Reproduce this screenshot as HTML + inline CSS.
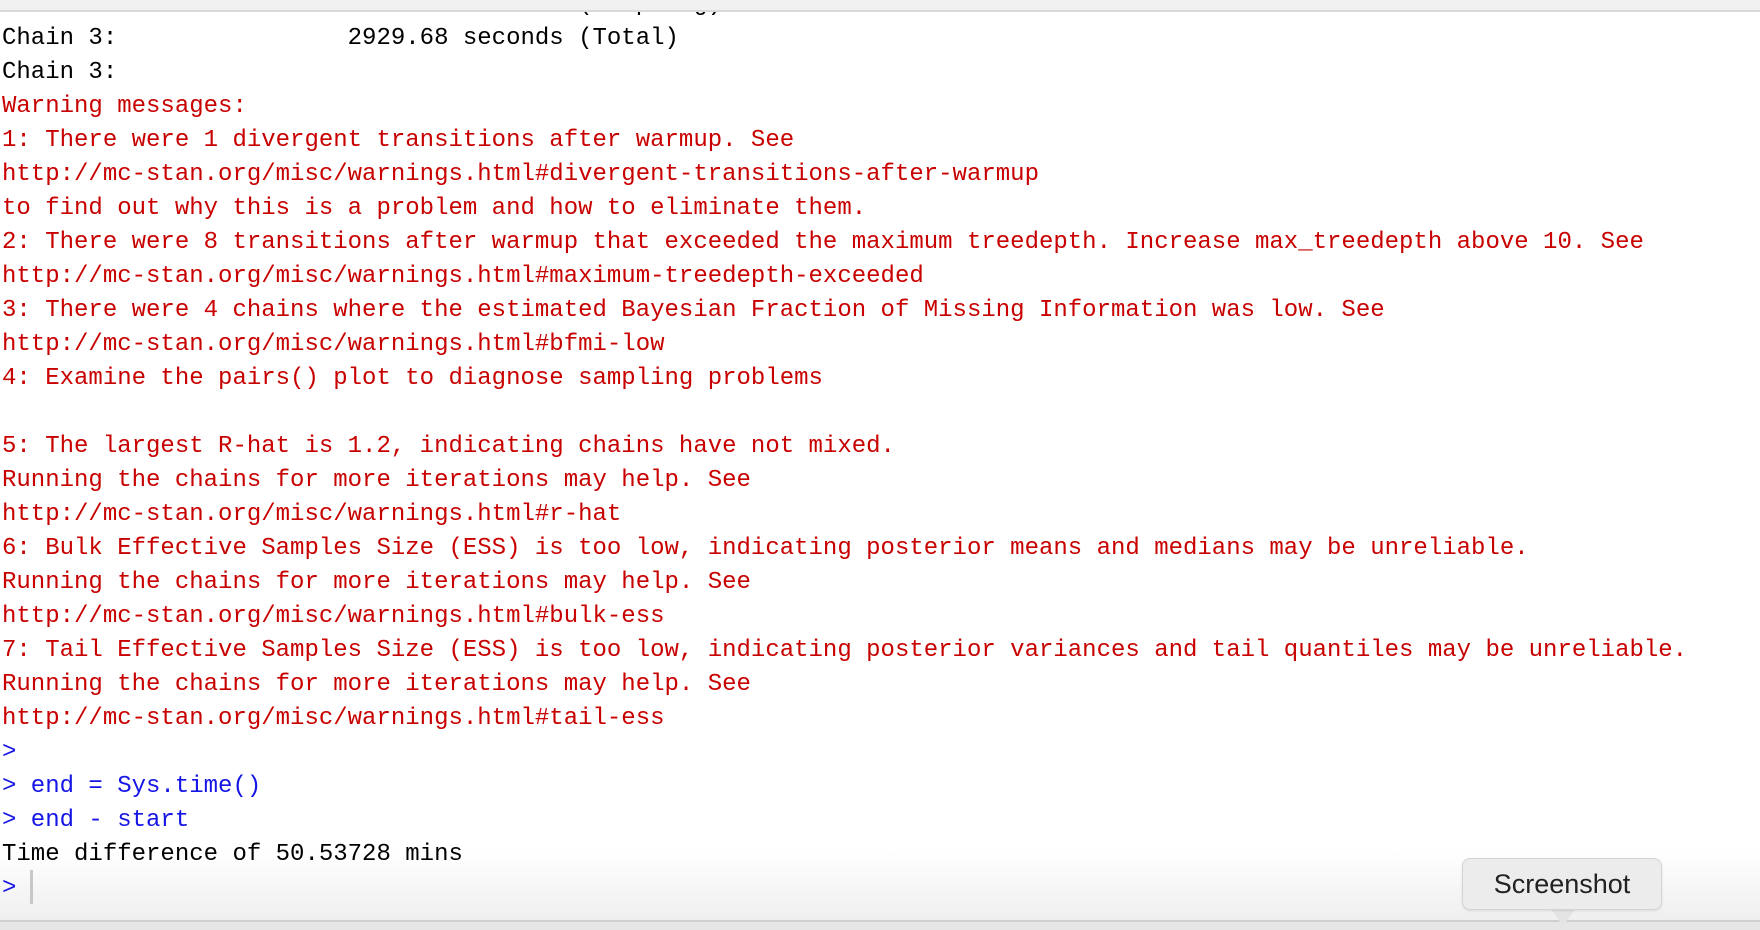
<!DOCTYPE html>
<html><head><meta charset="utf-8"><style>
html,body{margin:0;padding:0;width:1760px;height:930px;overflow:hidden;background:#fff;position:relative}
pre{position:absolute;left:2px;top:-12px;margin:0;font-family:"Liberation Mono","DejaVu Sans Mono",monospace;font-size:24px;line-height:34px;color:#000;white-space:pre}
.r{color:#c80000}.b{color:#1515e6}
.top{position:absolute;left:0;top:0;width:1760px;height:10px;background:#f0f0f0;border-bottom:2px solid #d9d9d9}
.grad{position:absolute;left:0;top:850px;width:1760px;height:70px;background:linear-gradient(#fff,#efefef)}
.botline{position:absolute;left:0;top:920px;width:1760px;height:2px;background:#cfcfcf}
.bot{position:absolute;left:0;top:922px;width:1760px;height:8px;background:#e6e6e6}
.cur{position:absolute;left:30px;top:870px;width:3px;height:34px;background:#c8c8c8}
.tip{position:absolute;left:1462px;top:858px;width:198px;height:50px;background:#ececec;border:1px solid #d4d4d4;border-radius:8px;box-shadow:0 1px 2px rgba(0,0,0,.1);font-family:"Liberation Sans",sans-serif;font-size:27px;color:#222;text-align:center;line-height:50px}
.arr{position:absolute;left:1550px;top:908px;width:0;height:0;border-left:13px solid transparent;border-right:13px solid transparent;border-top:18px solid #e4e4e4}
</style></head><body>
<div class="grad"></div>
<pre>Chain 3:                2865.01 seconds (Sampling)
Chain 3:                2929.68 seconds (Total)
Chain 3:
<span class="r">Warning messages:
1: There were 1 divergent transitions after warmup. See
http://mc-stan.org/misc/warnings.html#divergent-transitions-after-warmup
to find out why this is a problem and how to eliminate them.
2: There were 8 transitions after warmup that exceeded the maximum treedepth. Increase max_treedepth above 10. See
http://mc-stan.org/misc/warnings.html#maximum-treedepth-exceeded
3: There were 4 chains where the estimated Bayesian Fraction of Missing Information was low. See
http://mc-stan.org/misc/warnings.html#bfmi-low
4: Examine the pairs() plot to diagnose sampling problems

5: The largest R-hat is 1.2, indicating chains have not mixed.
Running the chains for more iterations may help. See
http://mc-stan.org/misc/warnings.html#r-hat
6: Bulk Effective Samples Size (ESS) is too low, indicating posterior means and medians may be unreliable.
Running the chains for more iterations may help. See
http://mc-stan.org/misc/warnings.html#bulk-ess
7: Tail Effective Samples Size (ESS) is too low, indicating posterior variances and tail quantiles may be unreliable.
Running the chains for more iterations may help. See
http://mc-stan.org/misc/warnings.html#tail-ess</span>
<span class="b">&gt;
&gt; end = Sys.time()
&gt; end - start</span>
Time difference of 50.53728 mins
<span class="b">&gt;</span></pre>
<div class="cur"></div>
<div class="top"></div>
<div class="botline"></div>
<div class="bot"></div>
<div class="arr"></div>
<div class="tip">Screenshot</div>
</body></html>
